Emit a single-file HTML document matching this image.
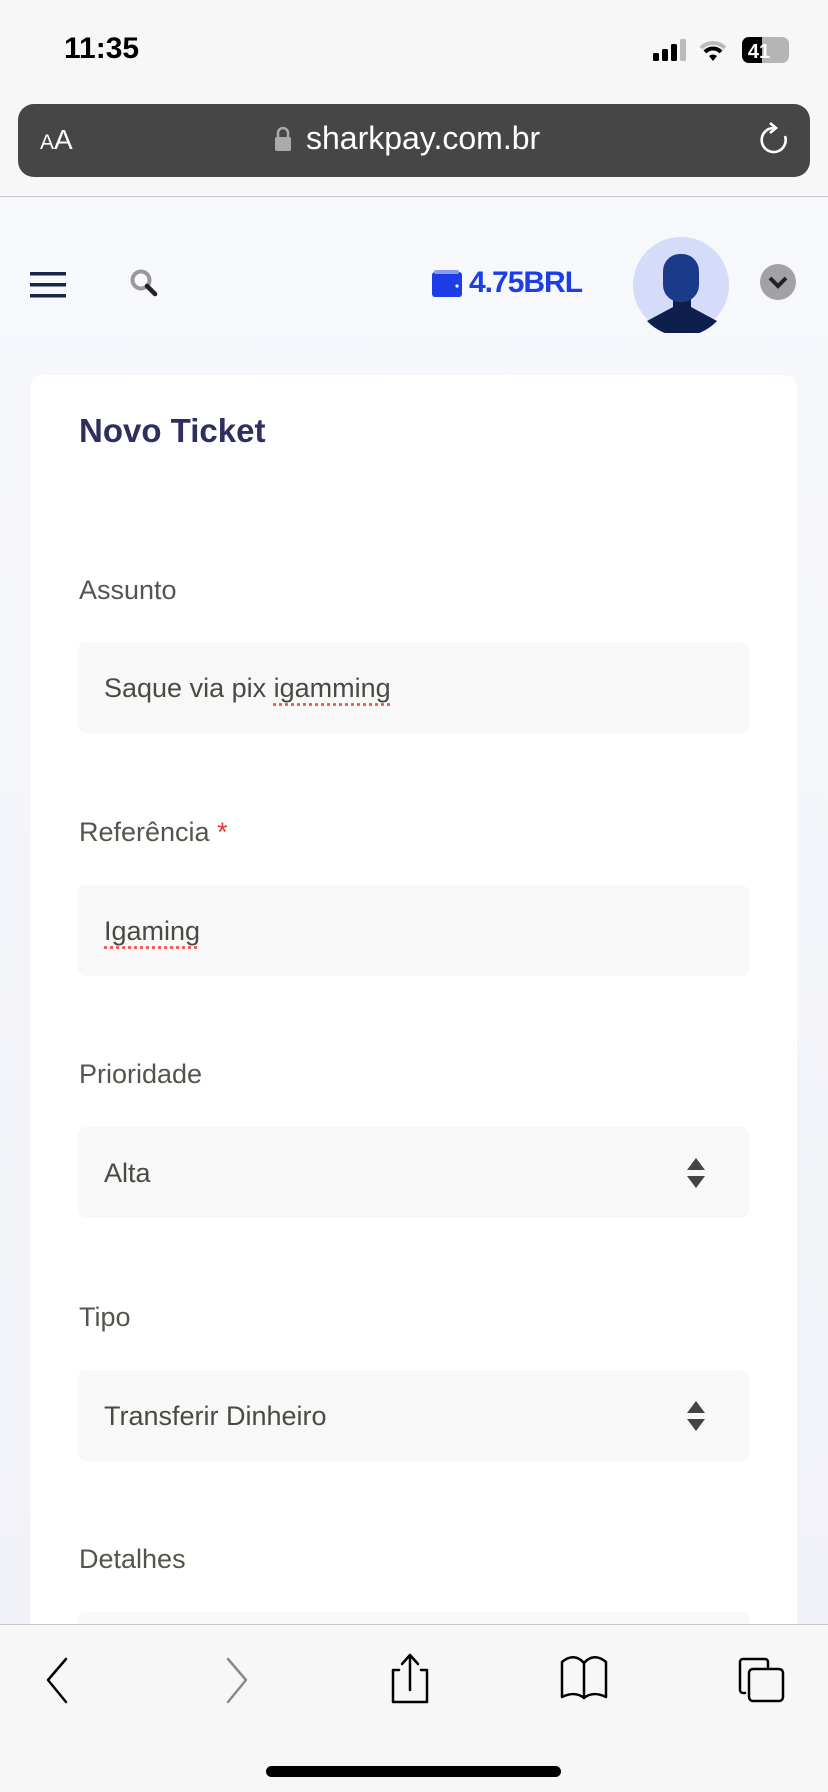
<!DOCTYPE html>
<html><head><meta charset="utf-8"><style>
*{margin:0;padding:0;box-sizing:border-box}
body{width:828px;height:1792px;overflow:hidden;background:#f3f4f9;font-family:"Liberation Sans",sans-serif;position:relative}
.abs{position:absolute}
.top{left:0;top:0;width:828px;height:197px;background:#f7f7f7;border-bottom:1.5px solid #c8c8cc}
.url{left:18px;top:104px;width:792px;height:73px;background:#464646;border-radius:16px}
.page{left:0;top:198px;width:828px;height:1426px;background:linear-gradient(#f7f8fc,#f1f2f7)}
.card{left:30px;top:375px;width:767px;height:1300px;background:#fff;border-radius:12px}
.lbl{position:absolute;left:79px;font-size:27px;color:#55554d}
.inp{position:absolute;left:78px;width:671px;height:91px;background:#f8f8f8;border-radius:8px;font-size:27px;color:#4a4a42;padding-left:26px;line-height:93px}
.sq{text-decoration:underline dotted #e55;text-underline-offset:6px}
.bot{left:0;top:1624px;width:828px;height:168px;background:#f7f7f7;border-top:1.5px solid #c8c8cc}
</style></head><body>
<div class="abs top"></div>
<div class="abs" style="left:64px;top:32px;font-size:30px;font-weight:bold;color:#000">11:35</div>
<svg class="abs" style="left:652px;top:36px" width="140" height="30">
<rect x="1" y="17" width="6" height="8" rx="1.5"/><rect x="10" y="13" width="6" height="12" rx="1.5"/><rect x="19" y="8" width="6" height="17" rx="1.5"/><rect x="28" y="3" width="6" height="22" rx="1.5" fill="#bbb"/>
<path d="M49 12a17 17 0 0 1 24 0" stroke="#bbb" stroke-width="4" fill="none"/><path d="M53 16a11 11 0 0 1 16 0" stroke="#000" stroke-width="4" fill="none"/><path d="M57 20l4 5 4-5a6 6 0 0 0-8 0z"/>
<rect x="90" y="1" width="47" height="26" rx="7" fill="#b5b5b5"/><path d="M97 1h13v26h-13a7 7 0 0 1-7-7v-12a7 7 0 0 1 7-7z"/>
<text x="107" y="22" font-size="20" font-weight="bold" fill="#fff" font-family="Liberation Sans" text-anchor="middle">41</text>
</svg>
<div class="abs url"></div>
<div class="abs" style="left:40px;top:124px;color:#fff"><span style="font-size:21px">A</span><span style="font-size:28px">A</span></div>
<svg class="abs" style="left:274px;top:126px" width="18" height="26"><path d="M4 11V7a5 5 0 0 1 10 0v4" stroke="#aaa" stroke-width="2.5" fill="none"/><rect x="1" y="11" width="16" height="14" rx="2" fill="#aaa"/></svg>
<div class="abs" style="left:306px;top:120px;font-size:32px;color:#fff">sharkpay.com.br</div>
<svg class="abs" style="left:756px;top:122px" width="34" height="36"><path d="M18 6a12 12 0 1 0 11 8" stroke="#fff" stroke-width="2.6" fill="none"/><path d="M14 1l6 5-6 5" stroke="#fff" stroke-width="2.6" fill="none"/></svg>
<div class="abs page"></div>
<svg class="abs" style="left:30px;top:272px" width="36" height="26"><rect y="0" width="36" height="3.5" fill="#17264a"/><rect y="11" width="36" height="3.5" fill="#17264a"/><rect y="22" width="36" height="3.5" fill="#17264a"/></svg>
<svg class="abs" style="left:129px;top:268px" width="32" height="32"><circle cx="12" cy="12" r="8.5" stroke="#999" stroke-width="4" fill="none"/><path d="M18 18l8 8" stroke="#222" stroke-width="4.5" stroke-linecap="round"/></svg>
<svg class="abs" style="left:432px;top:270px" width="32" height="28"><rect y="2" width="30" height="25" rx="3" fill="#1c3de8"/><rect x="2" y="0" width="25" height="4" rx="2" fill="#8b9cf0"/><circle cx="25" cy="16" r="1.6" fill="#fff"/></svg>
<div class="abs" style="left:469px;top:266px;font-size:30px;font-weight:bold;color:#1c3de8;letter-spacing:-1px">4.75BRL</div>
<svg class="abs" style="left:633px;top:237px" width="96" height="96"><circle cx="48" cy="48" r="48" fill="#d4dcfa"/><path d="M40 60h18v10l26 14a48 48 0 0 1-70 0l26-14z" fill="#0f1f4d"/><rect x="30" y="17" width="36" height="48" rx="17" fill="#1c3a8a"/></svg>
<svg class="abs" style="left:760px;top:264px" width="36" height="36"><circle cx="18" cy="18" r="18" fill="#a1a1a6"/><path d="M10 14l8 8 8-8" stroke="#222" stroke-width="4" fill="none"/></svg>
<div class="abs card"></div>
<div class="abs" style="left:79px;top:412px;font-size:33px;font-weight:bold;color:#2e2f5e">Novo Ticket</div>
<div class="lbl" style="top:575px">Assunto</div>
<div class="inp" style="top:642px">Saque via pix <span class="sq">igamming</span></div>
<div class="lbl" style="top:817px">Referência <span style="color:#e33">*</span></div>
<div class="inp" style="top:885px"><span class="sq">Igaming</span></div>
<div class="lbl" style="top:1059px">Prioridade</div>
<div class="inp" style="top:1127px">Alta</div>
<svg class="abs" style="left:686px;top:1158px" width="20" height="30"><path d="M10 0l9 12H1z" fill="#444"/><path d="M10 30l9-12H1z" fill="#444"/></svg>
<div class="lbl" style="top:1302px">Tipo</div>
<div class="inp" style="top:1370px">Transferir Dinheiro</div>
<svg class="abs" style="left:686px;top:1401px" width="20" height="30"><path d="M10 0l9 12H1z" fill="#444"/><path d="M10 30l9-12H1z" fill="#444"/></svg>
<div class="lbl" style="top:1544px">Detalhes</div>
<div class="inp" style="top:1612px;height:80px"></div>
<div class="abs bot"></div>
<svg class="abs" style="left:0;top:1640px" width="828" height="80" fill="none" stroke-width="2.5" stroke-linejoin="round" stroke-linecap="round">
<path d="M66 19L48 40l18 22" stroke="#000"/>
<path d="M228 19l18 21-18 22" stroke="#8a8a8a"/>
<path d="M399 30h-6v32h34V30h-6M410 50V16M402 24l8-9 8 9" stroke="#000"/>
<path d="M584 58c-6-5-14-5-22-1V22c8-7 16-6 22 1 6-7 14-8 22-1v35c-8-4-16-4-22 1zM584 23v35" stroke="#000"/>
<rect x="749" y="29" width="34" height="32" rx="4" stroke="#000"/><path d="M745 53h-2a3 3 0 0 1-3-3V22a3 3 0 0 1 3-3h22a3 3 0 0 1 3 3v5" stroke="#000"/>
</svg>
<div class="abs" style="left:266px;top:1766px;width:295px;height:11px;border-radius:6px;background:#000"></div>
</body></html>
